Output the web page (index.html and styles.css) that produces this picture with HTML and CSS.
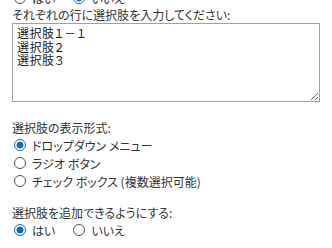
FILE: index.html
```html
<!DOCTYPE html>
<html lang="ja">
<head>
<meta charset="utf-8">
<link rel="stylesheet" href="styles.css">
</head>
<body>
<div class="form">
  <div class="inline-row top-cut">
    <label class="opt"><input type="radio" name="a0"><span>はい</span></label>
    <label class="opt"><input type="radio" name="a0" checked><span>いいえ</span></label>
  </div>
  <div class="label first">それぞれの行に選択肢を入力してください:</div>
  <textarea class="choices">選択肢１－１
選択肢２
選択肢３</textarea>
  <div class="label sec2">選択肢の表示形式:</div>
  <div class="stack">
    <label class="opt"><input type="radio" name="a1" checked><span>ドロップダウン メニュー</span></label>
    <label class="opt"><input type="radio" name="a1"><span>ラジオ ボタン</span></label>
    <label class="opt"><input type="radio" name="a1"><span>チェック ボックス (複数選択可能)</span></label>
  </div>
  <div class="label sec3">選択肢を追加できるようにする:</div>
  <div class="inline-row">
    <label class="opt"><input type="radio" name="a2" checked><span>はい</span></label>
    <label class="opt"><input type="radio" name="a2"><span>いいえ</span></label>
  </div>
</div>
</body>
</html>
```
FILE: styles.css
```css
html, body {
  margin: 0;
  padding: 0;
  background: #fff;
  overflow: hidden;
}
body {
  font-family: "Noto Sans CJK JP", "Noto Sans", sans-serif;
  font-size: 12px;
  color: #333;
  font-feature-settings: "palt";
}
.form {
  padding-left: 12px;
  display: flex;
  flex-direction: column;
  align-items: flex-start;
}
.label {
  line-height: 16px;
  height: 16px;
  white-space: nowrap;
}
.top-cut {
  margin-top: -11px;
}
.inline-row {
  display: flex;
  gap: 16px;
  height: 18px;
  align-items: center;
}
.stack {
  display: flex;
  flex-direction: column;
}
.stack .opt {
  height: 18px;
}
.opt {
  display: flex;
  align-items: center;
  gap: 6px;
  padding-left: 2px;
  white-space: nowrap;
}
.opt input {
  appearance: none;
  -webkit-appearance: none;
  margin: 0;
  width: 12px;
  height: 12px;
  border: 1px solid #555;
  border-radius: 50%;
  box-sizing: border-box;
  background: #fff;
  flex: none;
}
.opt input:checked {
  border-color: #0f6cbd;
  background: radial-gradient(circle, #0f6cbd 0 3.2px, #fff 3.8px);
}
.choices {
  box-sizing: border-box;
  width: 308px;
  height: 79px;
  margin: 0;
  padding: 2px 4px;
  border: 1px solid #a0a0a0;
  font-family: inherit;
  font-size: 12px;
  line-height: 13.5px;
  color: #222;
  font-feature-settings: "palt";
  letter-spacing: 0.5px;
  resize: both;
  outline: none;
}
.sec2 {
  margin-top: 18px;
}
.sec3 {
  margin-top: 15px;
}
```
